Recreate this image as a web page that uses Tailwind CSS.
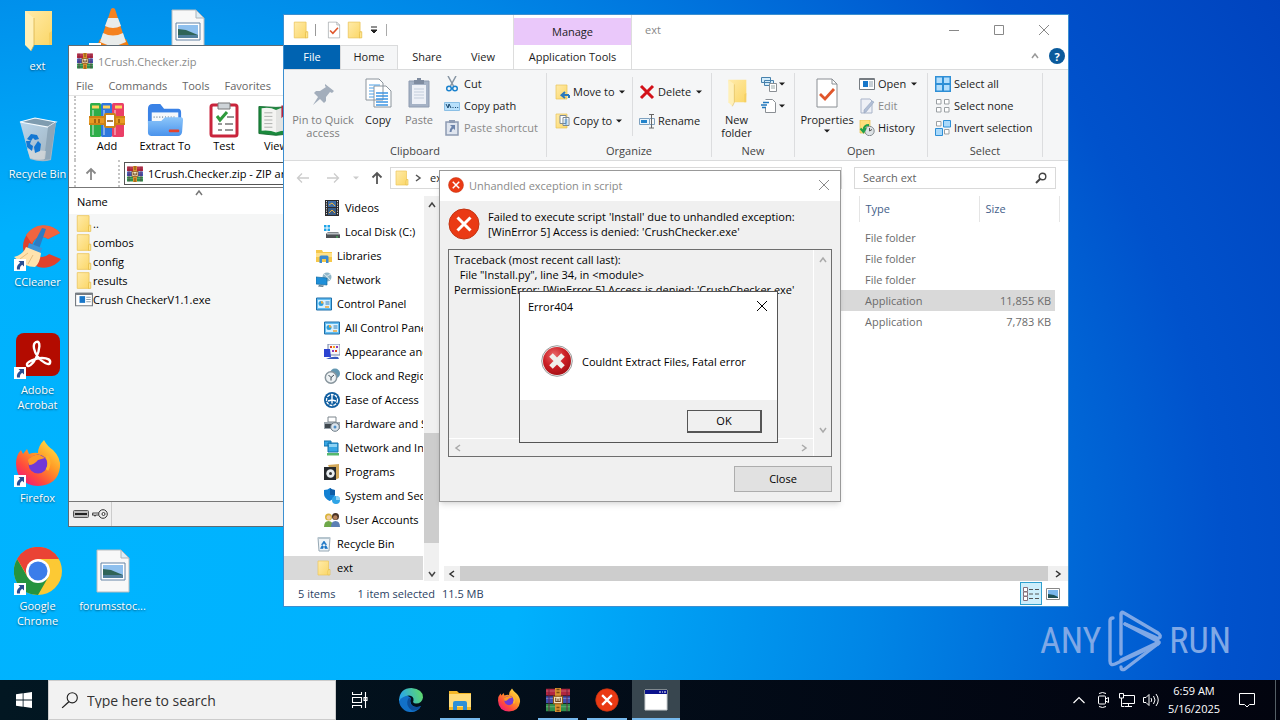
<!DOCTYPE html>
<html lang="en">
<head>
<meta charset="utf-8">
<meta name="viewport" content="width=device-width, initial-scale=1">
<title>Desktop</title>
<script src="https://cdn.jsdelivr.net/npm/@tailwindcss/browser@4"></script>
</head>
<body class="h-screen overflow-hidden font-['Open_Sans','Noto_Sans',sans-serif] text-[11px] leading-[15px] text-black">

<svg class="absolute size-0" aria-hidden="true">
  <defs>
    <linearGradient id="gFolder" x1="0" y1="0" x2="1" y2="1"><stop offset="0" stop-color="#ffebaa"/><stop offset="1" stop-color="#fbd768"/></linearGradient>
    <linearGradient id="gBlue" x1="0" y1="0" x2="0" y2="1"><stop offset="0" stop-color="#8cc6fa"/><stop offset="1" stop-color="#4a93ec"/></linearGradient>
    <linearGradient id="gFox" x1="1" y1="0" x2="0.2" y2="1"><stop offset="0" stop-color="#fff44f"/><stop offset="0.45" stop-color="#ff9a26"/><stop offset="0.75" stop-color="#ff4a3d"/><stop offset="1" stop-color="#f0177e"/></linearGradient>
    <linearGradient id="gEdge" x1="0" y1="0.2" x2="1" y2="0"><stop offset="0" stop-color="#2aa8e8"/><stop offset="1" stop-color="#63dd62"/></linearGradient>
    <radialGradient id="gErr" cx="0.4" cy="0.3" r="0.8"><stop offset="0" stop-color="#e96a6a"/><stop offset="0.5" stop-color="#cc1f25"/><stop offset="1" stop-color="#9c0d12"/></radialGradient>
    <linearGradient id="gBin" x1="0" y1="0" x2="1" y2="1"><stop offset="0" stop-color="#b9d7ee"/><stop offset="1" stop-color="#9fb0bc"/></linearGradient>
  </defs>
  <symbol id="folder" viewBox="0 0 16 16"><path d="M2 1h10.500v14H2z" fill="url(#gFolder)" stroke="#ecc65b" stroke-width=".7"/><path d="M12.500 9.500H14V15h-2v-4z" fill="#ffe58f" stroke="#e3b93f" stroke-width=".6"/></symbol>
  <symbol id="openfolder" viewBox="0 0 48 48"><path d="M11 4h27v20l-1 14H16z" fill="url(#gFolder)"/><path d="M35 26l3 -2 0 14h-3z" fill="#f5cf62"/><path d="M11 4l9 7v27l-3 6-6-6z" fill="#fff0b8"/><path d="M20 11v27l-3 6" fill="none" stroke="#d9b24a" stroke-width=".8"/></symbol>
  <symbol id="shortcut" viewBox="0 0 12 12"><path d="M0 0h12v12H0z" fill="#fff"/><path d="M4.500 2h5.500v5.500L8.200 5.800Q5.500 7.500 6 10.500H3Q2.200 6.500 6.200 3.800z" fill="#2b4f92"/></symbol>
  <symbol id="bin" viewBox="0 0 48 48"><path d="M6 7l15-4 21 4-5 38q-9 3-21-1z" fill="url(#gBin)"/><path d="M6 7l15-4 21 4-8 5z" fill="#7f9cb0" stroke="#f5fbff" stroke-width="1.200"/><path d="M34 12l-4 33 6-1 6-37z" fill="#8ea6b8"/><path d="M13 34l3 9q7 3 15 1l1-8z" fill="#e6e3df" opacity=".6"/><path d="M17 19l6 1 2 4-4 1-2-2-2 3-4-2zM12 26l5 0-1 3 3 2-1 5-5-4zM20 32l4-6 3 3-1 7-5 2z" fill="#1277d3"/></symbol>
  <symbol id="vlc" viewBox="0 0 48 48"><path d="M7 41l4-9h26l4 9v5H7z" fill="#f07d0e"/><path d="M22 2q2-2 4 0l11 34q-12 7-26 0z" fill="#f5821f"/><path d="M19 11h10l3 8q-8 4-16 0zM14 26q10 5 20 0l3 9q-13 7-26 0z" fill="#e9eceb"/></symbol>
  <symbol id="picfile" viewBox="0 0 48 48"><path d="M8 3h24l8 8v34H8z" fill="#f8f8f8" stroke="#b9bcbe"/><path d="M32 3v8h8z" fill="#dcecf5" stroke="#a9b4bb"/><path d="M12 16h24v17H12z" fill="#fff" stroke="#6583a5"/><path d="M14 18h20v13H14z" fill="#8fc0ee"/><path d="M14 22l8 1 12 5v3H14z" fill="#2f6457"/><path d="M14 28h20v3H14z" fill="#52809d"/></symbol>
  <symbol id="ccleaner" viewBox="0 0 48 48"><path d="M46 10A21 21 0 1 0 47 36L35 31A10 10 0 1 1 34 16z" fill="#e0412c"/><path d="M46 10A21 21 0 0 0 12 12l6 9a10 10 0 0 1 16-5z" fill="#f0643f"/><path d="M28 5l4 1-7 20-7-2z" fill="#2c7cc4"/><path d="M15 20l13 5-2 6-13-4z" fill="#3c94d8"/><path d="M12 24l15 6q-1 10-6 14-10 0-21-10 9-2 12-10z" fill="#ffe3ae"/><path d="M6 36l8-6M14 41l5-9" stroke="#e6bd7e"/></symbol>
  <symbol id="acrobat" viewBox="0 0 48 48"><rect x="2" y="2" width="44" height="43" rx="8" fill="#b30b00"/><path d="M22 11c5-2 4 8 0 16-3 6-8 10-9 7s9-7 15-7 9 2 8 5-8-1-12-6-6-13-2-15z" fill="none" stroke="#fff" stroke-width="2.400"/></symbol>
  <symbol id="firefox" viewBox="0 0 48 48"><path d="M30 1q3 6 9 10 8 8 7 17-2 18-22 19Q3 46 2 25q0-9 5-14l2 4 4-5 2 5q5-2 9-1 0-7 6-13z" fill="url(#gFox)"/><circle cx="24" cy="25" r="9.500" fill="#7139d6"/><path d="M14 21q5-6 12-5l5 3-7 2q-4 5-9 5z" fill="#ff9a26"/><path d="M33 17q4 7 0 14" fill="none" stroke="#ffb52e" stroke-width="3"/></symbol>
  <symbol id="chrome" viewBox="0 0 48 48"><circle cx="24" cy="24" r="24" fill="#fcc934"/><path d="M24 24L3.200 12A24 24 0 0 1 44.800 12z" fill="#ea4335"/><path d="M3.200 12A24 24 0 0 0 24 48l10.400-18H13.600z" fill="#25933f"/><path d="M24 12h20.800L34 24z" fill="#fcc934"/><path d="M3.200 12A24 24 0 0 1 44.800 12H24l-10 18z" fill="#ea4335"/><circle cx="24" cy="24" r="12" fill="#fff"/><circle cx="24" cy="24" r="9.500" fill="#3b7dea"/></symbol>
  <symbol id="rar" viewBox="0 0 32 32"><path d="M0 1h32v9H0z" fill="#b3263f"/><path d="M0 11h32v9H0z" fill="#3e4fae"/><path d="M0 21h32v10H0z" fill="#2f8f4b"/><path d="M0 4h32M0 14h32M0 25h32" stroke="#fff" stroke-opacity=".35"/><path d="M4 1v30M28 1v30" stroke="#6d2040" stroke-width="2" opacity=".6"/><path d="M12 0h8v32h-8z" fill="#d9912f"/><path d="M14 2h4M14 6h4M14 26h4M14 30h4" stroke="#7a4a11" stroke-width="2"/><rect x="10" y="11" width="12" height="10" fill="#f4e6c6" stroke="#8c5514" stroke-width="1.500"/><path d="M13 13v5h6v-5M16 14v4" stroke="#70451a" stroke-width="1.500" fill="none"/></symbol>
  <symbol id="add" viewBox="0 0 36 36"><rect x="1" y="1" width="11" height="34" rx="1.500" fill="#2fae4a"/><rect x="12" y="1" width="11" height="34" rx="1.500" fill="#2d77dd"/><rect x="23" y="1" width="12" height="34" rx="1.500" fill="#ea3f67"/><path d="M3 5h7M14 5h7M26 5h7" stroke="#ffd45c" stroke-width="3"/><path d="M4 8v25M15 8v25M26 8v25" stroke="#fff" stroke-opacity=".4" stroke-width="2"/><path d="M0 14h36v9H0z" fill="#e79a23"/><path d="M0 15h36M0 22h36" stroke="#b96c0b"/><rect x="16" y="12" width="10" height="13" rx="1" fill="#fff" stroke="#c98218" stroke-width="2"/><path d="M18 19h6M10 17v4M6 17v4M30 17v4" stroke="#93540c" stroke-width="1.500"/></symbol>
  <symbol id="extract" viewBox="0 0 38 36"><path d="M1 6q0-5 5-5h8l4 5h15q3 0 3 4v12H1z" fill="#3a82e6"/><path d="M5 10h28v12H5z" fill="#f5f8fb"/><path d="M7 15h24" stroke="#8998a8" stroke-width="2" stroke-dasharray="1 2"/><path d="M1 19h14l4-4h17q2 0 2 3l-1 13q-1 4-4 4H5q-4 0-4-4z" fill="url(#gBlue)"/><rect x="23" y="28" width="11" height="3" rx="1" fill="#e4422d"/></symbol>
  <symbol id="test" viewBox="0 0 32 36"><rect x="3" y="3" width="26" height="31" rx="2" fill="#fff" stroke="#c9253c" stroke-width="3"/><path d="M10 1h12v6H10z" fill="#ced4d8" stroke="#777"/><path d="M9 14l3 4 7-8" stroke="#2f9a3d" stroke-width="3" fill="none"/><path d="M19 15h7M10 22h4M17 22h8M10 28h4M17 28h8" stroke="#777" stroke-width="1.500"/></symbol>
  <symbol id="book" viewBox="0 0 40 36"><path d="M1 3l19 1 19-1v30l-19 2-19-2z" fill="#1b8a3d" stroke="#146b30"/><path d="M4 5q9-2 16 2v25q-7-3-16-2z" fill="#f4f4f2"/><path d="M36 5q-9-2-16 2v25q7-3 16-2z" fill="#e3e4e2"/><path d="M7 10h9M7 14h9M7 18h9M7 22h9M7 26h9" stroke="#a7aaa7"/><path d="M26 2h7v14l-4-3-3 3z" fill="#b3263f"/></symbol>
  <symbol id="exe" viewBox="0 0 16 16"><path d="M.5 2.500h15v11H.5z" fill="#fff" stroke="#767c82"/><path d="M1 2h14v2H1z" fill="#767c82"/><path d="M4 5h5v6H4z" fill="#1877c9"/><path d="M10 6h4M10 8h4M10 10h4" stroke="#8fa0ad"/></symbol>
  <symbol id="err" viewBox="0 0 32 32"><circle cx="16" cy="16" r="15" fill="#ea3a14" stroke="#c33412" stroke-width="1"/><path d="M9.500 9.500l13 13M22.500 9.500l-13 13" stroke="#fff" stroke-width="3"/></symbol>
  <symbol id="err2" viewBox="0 0 32 32"><circle cx="16" cy="16" r="15.300" fill="#f4f4f4" stroke="#9b9b9b"/><circle cx="16" cy="16" r="14" fill="url(#gErr)"/><path d="M10 10l12 12M22 10L10 22" stroke="#f0f0ec" stroke-width="5"/></symbol>
  <symbol id="propcheck" viewBox="0 0 32 32"><path d="M6 2h15l5 5v23H6z" fill="#fff" stroke="#8a8f94"/><path d="M21 2v5h5" fill="none" stroke="#8a8f94"/><path d="M9 17l5 5 9-10" fill="none" stroke="#e0562b" stroke-width="2.800"/></symbol>
  <symbol id="x" viewBox="0 0 12 12"><path d="M1 1l10 10M11 1L1 11" stroke="currentColor" fill="none"/></symbol>
  <symbol id="up" viewBox="0 0 8 8"><path d="M1 6l3-4 3 4" stroke="currentColor" stroke-width="1.500" fill="none"/></symbol>
  <symbol id="down" viewBox="0 0 8 8"><path d="M1 2l3 4 3-4" stroke="currentColor" stroke-width="1.500" fill="none"/></symbol>
  <symbol id="left" viewBox="0 0 8 8"><path d="M6 1L2 4l4 3" stroke="currentColor" stroke-width="1.500" fill="none"/></symbol>
  <symbol id="right" viewBox="0 0 8 8"><path d="M2 1l4 3-4 3" stroke="currentColor" stroke-width="1.500" fill="none"/></symbol>
  <symbol id="tri" viewBox="0 0 6 6"><path d="M0 1.500h6l-3 3z" fill="currentColor"/></symbol>
  <symbol id="arrow" viewBox="0 0 14 14"><path d="M13 7H1.500M6 2.500L1.500 7 6 11.500" fill="none" stroke="currentColor" stroke-width="1.300"/></symbol>
  <symbol id="arrowup" viewBox="0 0 14 14"><path d="M7 13V2M2.500 6.500L7 2l4.500 4.500" fill="none" stroke="currentColor" stroke-width="1.800"/></symbol>
  <symbol id="lens" viewBox="0 0 16 16"><circle cx="10" cy="6" r="4.500" fill="none" stroke="currentColor"/><path d="M7 9.500L1 15" stroke="currentColor" stroke-width="1.200"/></symbol>
  <symbol id="pin" viewBox="0 0 24 24"><path d="M14 1l9 7-2 2-2-1-4 5v4l-2 2-4-4-7 6 5-8-4-4 2-2h4l6-4-1-1z" fill="#a3aebc"/></symbol>
  <symbol id="copy" viewBox="0 0 32 32"><path d="M4 2h13l4 4v17H4zM12 9h12l5 5v16H12z" fill="#fff" stroke="#8b949c"/><path d="M7 8h11M7 11h5M7 14h5M7 17h5M7 20h5" stroke="#4da0e6"/><path d="M14 16h12M14 19h12M14 22h12M14 25h12M14 28h12" stroke="#3d95e4" stroke-width="1.300"/></symbol>
  <symbol id="paste" viewBox="0 0 32 32"><path d="M6 4h20v26H6z" fill="#a5b2c5" stroke="#8e9bb0"/><path d="M9 8h14v19H9z" fill="#eef1f7"/><path d="M11 3h10v4H11zM14 1h4v3h-4z" fill="#7f8ca0"/><path d="M11 12h10M11 15h10M11 18h10M11 21h10" stroke="#c3cddb"/></symbol>
  <symbol id="cut" viewBox="0 0 16 16"><path d="M4 0l5.500 10M12 0L6.500 10" stroke="#8795a3" stroke-width="1.500"/><circle cx="5" cy="12.500" r="2.300" fill="none" stroke="#1b82cd" stroke-width="1.500"/><circle cx="11" cy="12.500" r="2.300" fill="none" stroke="#1b82cd" stroke-width="1.500"/></symbol>
  <symbol id="copypath" viewBox="0 0 16 16"><path d="M.5 4.500h15v8H.5z" fill="#b8e0fb" stroke="#8abfe5"/><path d="M2 6l2 4 1-4 2 4M8.500 9.500h1M11 9.500h1M13.200 9.500h1" stroke="#15456c" fill="none"/></symbol>
  <symbol id="pastesc" viewBox="0 0 16 16"><path d="M2 2h12v13H2z" fill="#dfe5ef" stroke="#8d9bb3" stroke-width="1.500"/><path d="M5 0h6v3H5z" fill="#8d9bb3"/><path d="M6 5h5v5l-1.700-1.500Q7.500 9.500 7.500 12H5.500Q5.300 9 7.800 6.700z" fill="#6d84ab"/></symbol>
  <symbol id="moveto" viewBox="0 0 16 16"><path d="M1 1h11v14H1z" fill="url(#gFolder)" stroke="#e8c358" stroke-width=".7"/><path d="M14 11v3M14 11H6.500M10 8l-3.500 3.200L10 14" fill="none" stroke="#2b79bd" stroke-width="2"/></symbol>
  <symbol id="copyto" viewBox="0 0 16 16"><path d="M1 1h11v14H1z" fill="url(#gFolder)" stroke="#e8c358" stroke-width=".7"/><path d="M5 2.500h6v8H5zM8 4.500h6v8H8z" fill="#fff" stroke="#7c8995"/><path d="M9.500 7h3M9.500 9h3M9.500 11h3" stroke="#3c8ed5"/></symbol>
  <symbol id="delete" viewBox="0 0 16 16"><path d="M2 2l12 12M14 2L2 14" stroke="#d31119" stroke-width="3"/></symbol>
  <symbol id="rename" viewBox="0 0 16 16"><path d="M.5 5.500h10v6H.5z" fill="#eaf5fd" stroke="#7ea1bf"/><path d="M2 7h6v3H2z" fill="#2383cb"/><path d="M11 5.500h4.500v6H11" fill="none" stroke="#7ea1bf"/><path d="M10 1.500h5M10 15h5M12.500 1.500v13.500" stroke="#666" fill="none"/></symbol>
  <symbol id="newitem" viewBox="0 0 16 16"><path d="M.5 1.500h9v5h-9zM3.500 4.500h9v5h-9z" fill="#d3ecfb" stroke="#4781ac"/><path d="M8.500 7.500h7v8h-7z" fill="#fff" stroke="#8a8f94"/><path d="M10 10h4M10 12h4" stroke="#9aa"/></symbol>
  <symbol id="easy" viewBox="0 0 16 16"><path d="M4.500 1.500h7l3 3v10h-10V10" fill="#fff" stroke="#8a8f94"/><path d="M2 4.500h6M0 7h6M1 9.500h4" stroke="#2278bd" stroke-width="1.300"/></symbol>
  <symbol id="edit" viewBox="0 0 16 16"><path d="M2 1h9l2 2v12H2z" fill="#eef0f6" stroke="#a9b4c9"/><path d="M15 4L7 14l-2 1 0-3 8-9z" fill="#b2bfd6" stroke="#93a2be" stroke-width=".6"/></symbol>
  <symbol id="history" viewBox="0 0 16 16"><path d="M1 0h10v13H1z" fill="#ffdf7c" stroke="#e5bd4b" stroke-width=".7"/><circle cx="10.500" cy="11" r="4.700" fill="#dde2e5" stroke="#858c91"/><path d="M10.500 8v3l2.500-1.500" stroke="#555" fill="none"/><path d="M10 5Q5 5 4.500 10M1.500 8.500l3 3.500 2.500-4" fill="none" stroke="#21a04b" stroke-width="2"/></symbol>
  <symbol id="selall" viewBox="0 0 16 16"><path d="M0 0h16v16H0z" fill="#2e8fd6"/><path d="M1.500 1.500h5.500v5.500H1.500zM9 1.500h5.500v5.500H9zM1.500 9h5.500v5.500H1.500zM9 9h5.500v5.500H9z" fill="#b3defc"/></symbol>
  <symbol id="selnone" viewBox="0 0 16 16"><path d="M1.500 1.500h4.500v4.500H1.500zM9.500 1.500h4.500v4.500H9.500zM1.500 9.500h4.500v4.500H1.500zM9.500 9.500h4.500v4.500H9.500z" fill="#fff" stroke="#9a9fa3"/></symbol>
  <symbol id="selinv" viewBox="0 0 16 16"><path d="M1.500 1.500h4.500v4.500H1.500zM9.500 9.500h4.500v4.500H9.500z" fill="#fff" stroke="#9a9fa3"/><path d="M8.500.5h7v6.500h-7zM.5 8.500h7v7h-7z" fill="#a9d9fb" stroke="#2e8fd6"/></symbol>
  <symbol id="video" viewBox="0 0 16 16"><path d="M1 0h14v16H1z" fill="#2a2b2e"/><path d="M2.500 1v14M13.500 1v14" stroke="#ddd" stroke-dasharray="1.200 1.200"/><path d="M4 1h8v6H4z" fill="#406fa8"/><path d="M4 8h8v7H4z" fill="#3b5d87"/><path d="M5 5l3-2 3 3M5 13l3-3 3 3" stroke="#f0b43b" fill="none"/></symbol>
  <symbol id="disk" viewBox="0 0 16 16"><path d="M0 1h2.500v2.500H0zM3.500 1H6v2.500H3.500zM0 4.500h2.500V7H0zM3.500 4.500H6V7H3.500z" fill="#1ea4e8"/><path d="M2 10l2-2h10l2 3v3H2z" fill="#4d5155"/><path d="M3 9.500h12" stroke="#b9bec2" stroke-width="2"/><path d="M12 13h2" stroke="#45d05c"/></symbol>
  <symbol id="library" viewBox="0 0 16 16"><path d="M0 2h6l1 2h9v10H0z" fill="#f6c84a"/><path d="M0 5h16v4H0z" fill="#ffe18a"/><path d="M3.500 15V9q0-1.500 1.500-1.500h6q1.500 0 1.500 1.500v6h-2.500v-4H6v4z" fill="#3b8ad0"/></symbol>
  <symbol id="network" viewBox="0 0 16 16"><circle cx="11" cy="5" r="4.500" fill="#8fb6c8"/><path d="M8 2q3 2 6 6M15 2q-4 1-6 5" stroke="#dcebf1" fill="none"/><path d="M0 5l11 1v7L0 12z" fill="#1e8fd9" stroke="#156a9f" stroke-width=".7"/><path d="M3 13l5 .5-1 1.500-5-.5z" fill="#5c7e92"/></symbol>
  <symbol id="cpl" viewBox="0 0 16 16"><path d="M.5 2h15v12H.5z" fill="#62bdf2" stroke="#1e6fa9"/><path d="M2 4h12v8H2z" fill="#d9f1ff"/><circle cx="5" cy="7.500" r="2.500" fill="#2f9fdb"/><path d="M5 7.500V5a2.500 2.500 0 0 1 2.500 2.500z" fill="#f2a93b"/><path d="M9.500 6h4M9.500 8h4" stroke="#2d7db8"/><path d="M9 11h4" stroke="#eca53a" stroke-width="1.500"/></symbol>
  <symbol id="appear" viewBox="0 0 16 16"><path d="M4 0h12v11H4z" fill="#f5f5f8" stroke="#7180a5"/><path d="M6 2h2v2H6zM11 6h2v2h-2z" fill="#e0431f"/><path d="M9 2h2v2H9z" fill="#f6a51f"/><path d="M12 2h2v2h-2zM8 6h2v2H8z" fill="#8d3ab9"/><path d="M0 5h6l1 8H0z" fill="#2c43d1"/><path d="M2 15q6-3 12-2l1 2z" fill="#3958be"/></symbol>
  <symbol id="clock" viewBox="0 0 16 16"><circle cx="11" cy="5.500" r="5" fill="#6497b1"/><circle cx="7" cy="9.500" r="5.700" fill="#eef2f4" stroke="#88959d" stroke-width="1.500"/><path d="M4.500 7L7 9.500l3-2.500M7 9.500v3" stroke="#3b4a55" fill="none"/></symbol>
  <symbol id="ease" viewBox="0 0 16 16"><circle cx="8" cy="8" r="8" fill="#0f5d9f"/><circle cx="8" cy="8" r="5.500" fill="none" stroke="#fff" stroke-width="1.300" stroke-dasharray="3 1"/><path d="M8 2v6l4 1M8 8l-4 1M8 11.500V8" stroke="#fff" stroke-width="1.400" fill="none"/></symbol>
  <symbol id="hardware" viewBox="0 0 16 16"><path d="M4 1h8v5H4z" fill="#fff" stroke="#7d868d"/><path d="M0 6h16v7H0z" fill="#9ba5ad"/><path d="M1 8h8v4H1z" fill="#3f474e"/><circle cx="11" cy="11" r="4.300" fill="#dbe4ec" stroke="#6e7b86"/><circle cx="11" cy="11" r="1.500" fill="#4e8fc8"/></symbol>
  <symbol id="netint" viewBox="0 0 16 16"><path d="M0 1h7v5H0zM4 3h10v9H4z" fill="#36a6e4" stroke="#1270a9"/><path d="M5 4h8v3H5z" fill="#8cd2f5"/><path d="M3 13h12v2.500H3z" fill="#55b86d"/></symbol>
  <symbol id="programs" viewBox="0 0 16 16"><path d="M4 1l11-1v14l-4 2z" fill="#d2a85a"/><path d="M0 3h12v13H0z" fill="#25292d"/><circle cx="6.500" cy="9.500" r="4.200" fill="#e8edf0"/><circle cx="6.500" cy="9.500" r="1.500" fill="#333"/></symbol>
  <symbol id="security" viewBox="0 0 16 16"><path d="M0 2q4 0 6-2 2 2 5 2v5q-1 4-5.500 6Q0 10 0 6z" fill="#1381d3"/><path d="M6 0q2 2 5 2v5l-5 0z" fill="#0d5ca6"/><circle cx="12" cy="12" r="4" fill="#2fa4e6"/><path d="M12 12V8a4 4 0 0 1 4 4z" fill="#8bd2f7"/></symbol>
  <symbol id="users" viewBox="0 0 16 16"><circle cx="4.500" cy="5" r="3.500" fill="#d9b43d"/><circle cx="4.800" cy="5.500" r="2.200" fill="#f2cda6"/><path d="M0 15q0-6 4.500-6T9 15z" fill="#6fa849"/><circle cx="11.500" cy="4.500" r="3.500" fill="#4a3426"/><circle cx="11.300" cy="5.500" r="2.200" fill="#b3805b"/><path d="M7 15q0-6 4.500-6T16 15z" fill="#5b7fb4"/></symbol>
  <symbol id="binsm" viewBox="0 0 16 16"><path d="M2 1.500h12l-1 13.500H3z" fill="#eef4f8" stroke="#97a8b4"/><path d="M2 2h12" stroke="#b6c5ce" stroke-width="2"/><path d="M8 5l2.500 3.500H9L8 7 7 8.500H5.500zM4.500 12.500l1.500-3 1.500 1-.5 2zM11.500 12.500l-1.500-3-1.500 1 .5 2z" fill="#1873c4" stroke="#1873c4" stroke-width=".6"/></symbol>
  <symbol id="edge" viewBox="0 0 24 24"><path d="M0 12a12 12 0 0 0 17 11q4-2 5-5-4 2-8 0-4-3-2-8L6 6z" fill="#1271c8"/><path d="M0 12Q1 0 12.500 0 24 1 24 9.500q-1 6-7 6-4-.5-2.500-3Q15 8 10 7.500 3 8 0 13z" fill="url(#gEdge)"/><path d="M9 11q-3 7 4 11.500 6 .5 9-4.500-5 2-8.500 0-4-3-1.500-7.500-2-1-3 .5z" fill="#0c4f9b"/></symbol>
  <symbol id="explorer" viewBox="0 0 24 24"><path d="M1 3h8l2 2h12v17H1z" fill="#f4b728"/><path d="M1 6h22v13H1z" fill="#ffdc7b"/><path d="M5 22v-7q0-2 2-2h10q2 0 2 2v7h-4v-4H9v4z" fill="#2d8fd8"/></symbol>
  <symbol id="anylogo" viewBox="0 0 56 62"><g fill="none" stroke="currentColor" stroke-width="3.400" stroke-linejoin="round" stroke-linecap="round"><path d="M6 8Q3 8 3 11v40q0 5 5 3l43-20"/><path d="M14 44V4q0-3 3-1l34 20q4 3 1 5-2 1-4-1L18 14"/><path d="M18 14l34 18L14 50"/><path d="M52 33L18 59q-4 2-4-2"/></g></symbol>
</svg>

<div class="flex h-full flex-col">
<main class="relative min-h-0 flex-1 overflow-hidden bg-[radial-gradient(ellipse_125%_200%_at_8%_85%,#00b4ff_0%,#00b1fd_26%,#0086e6_48%,#0052cc_70%,#0034b0_100%)]">

  <!-- Desktop shortcuts -->
  <nav aria-label="Desktop" class="grid grid-cols-[repeat(3,75px)] grid-rows-[repeat(6,108px)] grid-flow-col text-center text-white [text-shadow:0_1px_2px_#0008]">
    <a href="#" class="flex flex-col items-center gap-[3px] pt-[7px]"><svg class="size-12"><use href="#openfolder"/></svg>ext</a>
    <a href="#" class="flex flex-col items-center gap-[3px] pt-[7px]"><svg class="size-12"><use href="#bin"/></svg>Recycle Bin</a>
    <a href="#" class="flex flex-col items-center gap-[3px] pt-[7px]"><span class="relative"><svg class="size-12"><use href="#ccleaner"/></svg><svg class="absolute bottom-0 left-0 size-3"><use href="#shortcut"/></svg></span>CCleaner</a>
    <a href="#" class="flex flex-col items-center gap-[3px] pt-[7px]"><span class="relative"><svg class="size-12"><use href="#acrobat"/></svg><svg class="absolute bottom-0 left-0 size-3"><use href="#shortcut"/></svg></span><span>Adobe<br>Acrobat</span></a>
    <a href="#" class="flex flex-col items-center gap-[3px] pt-[7px]"><span class="relative"><svg class="size-12"><use href="#firefox"/></svg><svg class="absolute bottom-0 left-0 size-3"><use href="#shortcut"/></svg></span>Firefox</a>
    <a href="#" class="flex flex-col items-center gap-[3px] pt-[7px]"><span class="relative"><svg class="size-12"><use href="#chrome"/></svg><svg class="absolute bottom-0 left-0 size-3"><use href="#shortcut"/></svg></span><span>Google<br>Chrome</span></a>
    <a href="#" aria-label="Media player" class="col-start-2 row-start-1 flex flex-col items-center pt-[7px]"><span class="relative"><svg class="size-12"><use href="#vlc"/></svg><svg class="absolute bottom-0 left-0 size-3"><use href="#shortcut"/></svg></span></a>
    <a href="#" class="col-start-2 row-start-6 flex flex-col items-center gap-[3px] pt-[7px]"><svg class="size-12"><use href="#picfile"/></svg>forumsstoc...</a>
    <a href="#" aria-label="Picture" class="col-start-3 row-start-1 flex flex-col items-center pt-[7px]"><svg class="size-12"><use href="#picfile"/></svg></a>
  </nav>

  <!-- Watermark -->
  <div class="absolute right-[49px] bottom-2 flex items-center gap-[6px] font-['Liberation_Sans_Narrow','Roboto_Condensed','Roboto',sans-serif] text-[36px] leading-[62px] text-[#7fa8e6]">
    <span>ANY</span><svg class="h-[62px] w-14"><use href="#anylogo"/></svg><span>RUN</span>
  </div>

  <!-- Archive window -->
  <section aria-label="1Crush.Checker.zip" class="absolute top-[45px] left-[68px] flex h-[482px] w-[480px] flex-col border border-[#5d6b75] bg-white">
    <header class="flex h-[30px] shrink-0 items-center gap-[5px] pl-2 text-[#8a8a8a]"><svg class="size-4"><use href="#rar"/></svg><h2>1Crush.Checker.zip</h2></header>
    <div class="flex h-5 shrink-0 items-center gap-[15px] border-b border-[#e5e5e5] pl-[7px] text-[#666]"><button>File</button><button>Commands</button><button>Tools</button><button>Favorites</button></div>
    <div class="ml-[5px] flex h-16 shrink-0 border-l-2 border-dotted border-[#c5c5c5]">
      <button class="flex w-[62px] flex-col items-center pt-[6px]"><svg class="h-9 w-9"><use href="#add"/></svg>Add</button>
      <button class="flex w-[54px] flex-col items-center pt-[6px] whitespace-nowrap"><svg class="h-9 w-9"><use href="#extract"/></svg>Extract To</button>
      <button class="flex w-16 flex-col items-center pt-[6px]"><svg class="h-9 w-9"><use href="#test"/></svg>Test</button>
      <button class="flex w-10 flex-col items-center pt-[6px]"><svg class="h-9 w-9"><use href="#book"/></svg>View</button>
    </div>
    <div class="ml-[5px] flex h-[27px] shrink-0 items-center border-l-2 border-dotted border-[#c5c5c5]">
      <button aria-label="Up one level" class="mr-1 flex h-full w-11 items-center border-r-2 border-dotted border-[#c5c5c5] pl-2 text-[#888]"><svg class="size-3.5"><use href="#arrowup"/></svg></button>
      <div class="flex h-[23px] flex-1 items-center gap-[5px] border border-[#555] pl-0.5"><svg class="size-4"><use href="#rar"/></svg>1Crush.Checker.zip - ZIP archive</div>
    </div>
    <div class="flex min-h-0 flex-1 flex-col border-t border-[#777]">
      <div class="flex h-[26px] shrink-0 items-center pl-2">Name<svg class="mb-4 ml-[87px] size-2 text-[#777]"><use href="#up"/></svg></div>
      <ul class="flex-1 bg-[#f5f6f6] pl-[6px] leading-[19px]">
        <li class="flex items-center"><svg class="h-[19px] w-[18px]"><use href="#folder"/></svg>..</li>
        <li class="flex items-center"><svg class="h-[19px] w-[18px]"><use href="#folder"/></svg>combos</li>
        <li class="flex items-center"><svg class="h-[19px] w-[18px]"><use href="#folder"/></svg>config</li>
        <li class="flex items-center"><svg class="h-[19px] w-[18px]"><use href="#folder"/></svg>results</li>
        <li class="flex items-center"><svg class="h-[19px] w-[18px]"><use href="#exe"/></svg>Crush CheckerV1.1.exe</li>
      </ul>
    </div>
    <footer class="flex h-[25px] shrink-0 items-center gap-[3px] border-t border-[#777] bg-[#f0f0f0] pl-1">
      <svg class="h-2 w-4" viewBox="0 0 16 8"><rect x=".5" y=".5" width="15" height="7" rx="1" fill="#bbb" stroke="#555"/><path d="M2 3h12v2H2z" fill="#222"/></svg>
      <svg class="h-3 w-4" viewBox="0 0 16 12"><path d="M7 5H1l-1 2h2l1 1 1-1h3" fill="none" stroke="#444" stroke-width="1.200"/><circle cx="11" cy="6" r="4.300" fill="#eee" stroke="#333"/><circle cx="11.500" cy="6" r="1.500" fill="#fff" stroke="#333"/></svg>
      <span class="h-full border-l border-[#ccc]"></span>
    </footer>
  </section>

  <!-- File manager window -->
  <section aria-label="ext" class="absolute top-[14px] left-[283px] flex h-[593px] w-[786px] flex-col border border-[#3c8fd0] bg-white text-[#1c1c1c]">
    <header class="flex h-[54px] shrink-0">
      <div class="flex w-[229px] shrink-0 flex-col">
        <div class="flex h-[30px] items-center pl-2">
          <svg class="size-[18px]"><use href="#folder"/></svg><span class="mx-[5px] h-3 border-l border-[#999]"></span>
          <button aria-label="Properties" class="ml-1"><svg class="size-[18px]"><use href="#propcheck"/></svg></button>
          <button aria-label="New folder" class="ml-[3px]"><svg class="size-[18px]"><use href="#folder"/></svg></button>
          <button aria-label="Customize toolbar" class="ml-[6px]"><svg class="h-2 w-2" viewBox="0 0 8 8"><path d="M1 1h6M1 4h6L4 7z" stroke="#222" fill="#222"/></svg></button>
          <span class="ml-2 h-3 border-l border-[#aaa]"></span>
        </div>
        <div role="tablist" class="flex h-6">
          <button role="tab" class="w-14 bg-[#0063b1] pb-px text-white">File</button>
          <button role="tab" aria-selected="true" class="w-[58px] border-x border-t border-[#dadbdc] bg-[#f5f6f7] pb-0.5">Home</button>
          <button role="tab" class="w-[58px] pb-px">Share</button>
          <button role="tab" class="w-[54px] pb-px">View</button>
        </div>
      </div>
      <div class="w-[119px] shrink-0 border-x border-[#ddd] text-center">
        <div class="mt-[3px] flex h-[27px] items-center justify-center bg-[#eac8fa]">Manage</div>
        <button role="tab" class="h-6 pb-px whitespace-nowrap">Application Tools</button>
      </div>
      <h2 class="pt-[7px] pl-[13px] text-[#888]">ext</h2>
      <div class="ml-auto flex flex-col">
        <div class="flex h-[29px] items-center pr-px text-[#888]">
          <button aria-label="Minimize" class="flex w-[45px] justify-center"><svg class="size-3" viewBox="0 0 12 12"><path d="M1 6.500h10" stroke="currentColor"/></svg></button>
          <button aria-label="Maximize" class="flex w-[45px] justify-center"><svg class="size-3" viewBox="0 0 12 12"><path d="M1.500 1.500h9v9h-9z" fill="none" stroke="currentColor"/></svg></button>
          <button aria-label="Close" class="flex w-[46px] justify-center"><svg class="size-3"><use href="#x"/></svg></button>
        </div>
        <div class="flex h-6 items-center justify-end gap-[10px] pr-[3px]">
          <button aria-label="Collapse ribbon" class="text-[#999]"><svg class="size-2"><use href="#up"/></svg></button>
          <button aria-label="Help" class="flex size-4 items-center justify-center rounded-full bg-[#0a5a9c] font-bold text-white">?</button>
        </div>
      </div>
    </header>

    <!-- Ribbon -->
    <div class="flex h-[92px] shrink-0 border-y border-[#dadbdc] bg-[#f5f6f7] py-[3px] leading-[13px]">
      <div class="flex w-[263px] shrink-0 flex-col border-r border-[#dcdddf]">
        <div class="flex h-[71px]">
          <button class="flex w-[78px] flex-col items-center text-[#7d7d7d]"><svg class="mt-2 mb-1 h-7 w-6"><use href="#pin"/></svg>Pin to Quick<br>access</button>
          <button class="flex w-8 flex-col items-center"><svg class="mt-1 mb-1 size-8"><use href="#copy"/></svg>Copy</button>
          <button class="flex w-[50px] flex-col items-center text-[#7d7d7d]"><svg class="mt-1 mb-1 size-8"><use href="#paste"/></svg>Paste</button>
          <div class="flex flex-col leading-[22px]">
            <button class="flex items-center gap-1"><svg class="size-4"><use href="#cut"/></svg>Cut</button>
            <button class="flex items-center gap-1"><svg class="size-4"><use href="#copypath"/></svg>Copy path</button>
            <button class="flex items-center gap-1 text-[#8a8a8a]"><svg class="size-4"><use href="#pastesc"/></svg>Paste shortcut</button>
          </div>
        </div>
        <div class="text-center text-[#444]">Clipboard</div>
      </div>
      <div class="flex w-[165px] shrink-0 flex-col border-r border-[#dcdddf]">
        <div class="flex h-[71px] leading-[29px]">
          <div class="mt-1 mb-2 flex w-[86px] flex-col border-r border-[#dcdddf] pl-2">
            <button class="flex items-center gap-[2px]"><svg class="size-4"><use href="#moveto"/></svg>Move to<svg class="ml-[2px] size-1.5"><use href="#tri"/></svg></button>
            <button class="flex items-center gap-[2px]"><svg class="size-4"><use href="#copyto"/></svg>Copy to<svg class="ml-[2px] size-1.5"><use href="#tri"/></svg></button>
          </div>
          <div class="mt-1 flex flex-col pl-[6px]">
            <button class="flex items-center gap-[3px]"><svg class="size-4"><use href="#delete"/></svg>Delete<svg class="ml-[2px] size-1.5"><use href="#tri"/></svg></button>
            <button class="flex items-center gap-[3px]"><svg class="size-4"><use href="#rename"/></svg>Rename</button>
          </div>
        </div>
        <div class="text-center text-[#444]">Organize</div>
      </div>
      <div class="flex w-[83px] shrink-0 flex-col border-r border-[#dcdddf]">
        <div class="flex h-[71px]">
          <button class="flex w-[49px] flex-col items-center"><svg class="mt-1 mb-1 size-8"><use href="#openfolder"/></svg>New<br>folder</button>
          <div class="flex flex-col">
            <button aria-label="New item" class="flex h-[22px] items-center gap-[2px]"><svg class="size-4"><use href="#newitem"/></svg><svg class="size-1.5"><use href="#tri"/></svg></button>
            <button aria-label="Easy access" class="flex h-[22px] items-center gap-[2px]"><svg class="size-4"><use href="#easy"/></svg><svg class="size-1.5"><use href="#tri"/></svg></button>
          </div>
        </div>
        <div class="text-center text-[#444]">New</div>
      </div>
      <div class="flex w-[133px] shrink-0 flex-col border-r border-[#dcdddf]">
        <div class="flex h-[71px]">
          <button class="flex w-[64px] flex-col items-center"><svg class="mt-1 mb-1 size-8"><use href="#propcheck"/></svg>Properties<svg class="mt-0.5 size-1.5"><use href="#tri"/></svg></button>
          <div class="flex flex-col leading-[22px]">
            <button class="flex items-center gap-[3px]"><svg class="size-4"><use href="#exe"/></svg>Open<svg class="ml-[2px] size-1.5"><use href="#tri"/></svg></button>
            <button class="flex items-center gap-[3px] text-[#8a8a8a]"><svg class="size-4"><use href="#edit"/></svg>Edit</button>
            <button class="flex items-center gap-[3px]"><svg class="size-4"><use href="#history"/></svg>History</button>
          </div>
        </div>
        <div class="text-center text-[#444]">Open</div>
      </div>
      <div class="flex w-[115px] shrink-0 flex-col border-r border-[#dcdddf]">
        <div class="flex h-[71px] flex-col pl-[7px] leading-[22px] whitespace-nowrap">
          <button class="flex items-center gap-[3px]"><svg class="size-4"><use href="#selall"/></svg>Select all</button>
          <button class="flex items-center gap-[3px]"><svg class="size-4"><use href="#selnone"/></svg>Select none</button>
          <button class="flex items-center gap-[3px]"><svg class="size-4"><use href="#selinv"/></svg>Invert selection</button>
        </div>
        <div class="text-center text-[#444]">Select</div>
      </div>
    </div>

    <!-- Address row -->
    <div class="flex h-[35px] shrink-0 items-center pr-3 pb-0.5">
      <button aria-label="Back" class="ml-3 text-[#ccc]"><svg class="size-3.5"><use href="#arrow"/></svg></button>
      <button aria-label="Forward" class="ml-4 rotate-180 text-[#ccc]"><svg class="size-3.5"><use href="#arrow"/></svg></button>
      <button aria-label="Recent" class="ml-[13px] text-[#ccc]"><svg class="size-1.5"><use href="#tri"/></svg></button>
      <button aria-label="Up" class="ml-[11px] text-[#555]"><svg class="size-3.5"><use href="#arrowup"/></svg></button>
      <div class="ml-[6px] flex h-[22px] flex-1 items-center border border-[#d9d9d9] pl-[3px]"><svg class="size-4"><use href="#folder"/></svg><svg class="mr-2 ml-1 size-2 text-[#555]"><use href="#right"/></svg>ext</div>
      <label class="ml-3 flex h-[22px] w-[202px] items-center border border-[#d9d9d9] px-2"><input type="search" aria-label="Search ext" placeholder="Search ext" class="min-w-0 flex-1 outline-none placeholder:text-[#5f5f5f]"><svg class="size-3 text-[#444]" viewBox="0 0 12 12"><circle cx="7.500" cy="4.500" r="3.300" fill="none" stroke="currentColor" stroke-width="1.400"/><path d="M5 7L1 11" stroke="currentColor" stroke-width="2"/></svg></label>
    </div>

    <div class="flex min-h-0 flex-1 text-black">
      <nav aria-label="Folders" class="flex w-[155px] shrink-0">
        <ul class="flex-1 overflow-hidden leading-6 whitespace-nowrap">
          <li class="flex items-center gap-[5px] pl-10"><svg class="size-4 shrink-0"><use href="#video"/></svg>Videos</li>
          <li class="flex items-center gap-[5px] pl-10"><svg class="size-4 shrink-0"><use href="#disk"/></svg>Local Disk (C:)</li>
          <li class="flex items-center gap-[5px] pl-8"><svg class="size-4 shrink-0"><use href="#library"/></svg>Libraries</li>
          <li class="flex items-center gap-[5px] pl-8"><svg class="size-4 shrink-0"><use href="#network"/></svg>Network</li>
          <li class="flex items-center gap-[5px] pl-8"><svg class="size-4 shrink-0"><use href="#cpl"/></svg>Control Panel</li>
          <li class="flex items-center gap-[5px] pl-10"><svg class="size-4 shrink-0"><use href="#cpl"/></svg>All Control Panel Items</li>
          <li class="flex items-center gap-[5px] pl-10"><svg class="size-4 shrink-0"><use href="#appear"/></svg>Appearance and Personalization</li>
          <li class="flex items-center gap-[5px] pl-10"><svg class="size-4 shrink-0"><use href="#clock"/></svg>Clock and Region</li>
          <li class="flex items-center gap-[5px] pl-10"><svg class="size-4 shrink-0"><use href="#ease"/></svg>Ease of Access</li>
          <li class="flex items-center gap-[5px] pl-10"><svg class="size-4 shrink-0"><use href="#hardware"/></svg>Hardware and Sound</li>
          <li class="flex items-center gap-[5px] pl-10"><svg class="size-4 shrink-0"><use href="#netint"/></svg>Network and Internet</li>
          <li class="flex items-center gap-[5px] pl-10"><svg class="size-4 shrink-0"><use href="#programs"/></svg>Programs</li>
          <li class="flex items-center gap-[5px] pl-10"><svg class="size-4 shrink-0"><use href="#security"/></svg>System and Security</li>
          <li class="flex items-center gap-[5px] pl-10"><svg class="size-4 shrink-0"><use href="#users"/></svg>User Accounts</li>
          <li class="flex items-center gap-[5px] pl-8"><svg class="size-4 shrink-0"><use href="#binsm"/></svg>Recycle Bin</li>
          <li class="flex items-center gap-[5px] bg-[#d9d9d9] pl-8"><svg class="size-4 shrink-0"><use href="#folder"/></svg>ext</li>
        </ul>
        <div class="ml-px flex w-[15px] flex-col items-center bg-[#f0f0f0] pt-[5px] pb-[3px] text-[#444]">
          <svg class="size-2 shrink-0"><use href="#up"/></svg><span class="flex-1"></span><span class="h-[110px] w-full bg-[#cdcdcd]"></span><svg class="mt-[27px] size-2 shrink-0"><use href="#down"/></svg>
        </div>
      </nav>
      <div class="flex min-w-0 flex-1 flex-col pl-[5px]">
        <table class="w-full table-fixed text-left text-[#6b6b6b]">
          <thead class="leading-[26px] text-[#44608a]"><tr><th class="border-r border-[#e5e5e5]"></th><th class="w-[120px] border-r border-[#e5e5e5] pl-[6px] font-normal">Type</th><th class="w-[76px] pl-[6px] font-normal">Size</th><th class="w-1 border-r border-[#e5e5e5]"></th><th class="w-[9px]"></th></tr></thead>
          <tbody class="leading-[21px] before:block before:h-[5px]">
            <tr><td></td><td class="pl-[6px]">File folder</td><td></td><td></td><td></td></tr>
            <tr><td></td><td class="pl-[6px]">File folder</td><td></td><td></td><td></td></tr>
            <tr><td></td><td class="pl-[6px]">File folder</td><td></td><td></td><td></td></tr>
            <tr><td class="bg-[#d9d9d9]"></td><td class="bg-[#d9d9d9] pl-[6px]">Application</td><td class="bg-[#d9d9d9] pr-1 text-right">11,855 KB</td><td></td><td></td></tr>
            <tr><td></td><td class="pl-[6px]">Application</td><td class="pr-1 text-right">7,783 KB</td><td></td><td></td></tr>
          </tbody>
        </table>
        <div class="mt-auto flex h-[15px] shrink-0 items-center bg-[#f0f0f0] text-[#333]"><svg class="mx-1 size-2"><use href="#left"/></svg><span class="h-full flex-1 bg-[#cdcdcd]"></span><svg class="mx-[6px] size-2"><use href="#right"/></svg></div>
      </div>
    </div>
    <footer class="flex h-[25px] shrink-0 items-center pl-[14px] text-[#2b3f63]">
      <span>5 items</span><span class="ml-[22px]">1 item selected</span><span class="ml-[7px]">11.5 MB</span>
      <button aria-label="Details view" class="ml-auto flex h-[23px] w-[22px] items-center justify-center border border-[#2fa0cf] bg-[#cdeefb]"><svg class="h-3.5 w-4" viewBox="0 0 16 14"><path d="M.5.500h4v4h-4zM.5 5h4v4h-4zM.5 9.500h4v4h-4z" fill="#fff" stroke="#86707c"/><path d="M6 2.500h4M6 7h4M6 11.500h4M12 2.500h4M12 7h4M12 11.500h4" stroke="#555"/></svg></button>
      <button aria-label="Thumbnail view" class="mr-2 ml-1"><svg class="h-3 w-3.5" viewBox="0 0 14 12"><path d="M.5.500h13v11H.5z" fill="#fff" stroke="#888"/><path d="M2 2h10v8H2z" fill="#7ab6ec"/><path d="M2 6l6 1 4 2v1H2z" fill="#1e4f55"/></svg></button>
    </footer>
  </section>

  <!-- Exception dialog -->
  <section role="dialog" aria-label="Unhandled exception in script" class="absolute top-[170px] left-[439px] flex h-[332px] w-[402px] flex-col border border-[#999] bg-[#f0f0f0] shadow-md">
    <header class="flex h-[30px] shrink-0 items-center gap-[5px] bg-white pr-[10px] pb-0.5 pl-2 text-[#8a8a8a]"><svg class="size-4"><use href="#err"/></svg><h2>Unhandled exception in script</h2><button aria-label="Dismiss" class="ml-auto"><svg class="size-3"><use href="#x"/></svg></button></header>
    <div class="flex flex-1 flex-col gap-[9px] px-2 pt-[7px] pb-[9px]">
      <div class="flex items-center gap-2"><svg class="size-8"><use href="#err"/></svg><p class="whitespace-nowrap">Failed to execute script 'Install' due to unhandled exception:<br>[WinError 5] Access is denied: 'CrushChecker.exe'</p></div>
      <div class="flex flex-1 border border-[#6e6e6e]">
        <div class="flex min-w-0 flex-1 flex-col">
          <pre class="flex-1 pt-[2px] pl-[5px] font-['Open_Sans','Noto_Sans',sans-serif]">Traceback (most recent call last):
  File "Install.py", line 34, in &lt;module&gt;
PermissionError: [WinError 5] Access is denied: 'CrushChecker.exe'</pre>
          <div class="flex h-[18px] items-center justify-between border-t border-white px-[5px] text-[#aaa]"><svg class="size-2"><use href="#left"/></svg><svg class="size-2"><use href="#right"/></svg></div>
        </div>
        <div class="flex w-[18px] flex-col items-center justify-between border-l border-white pt-[6px] pb-[22px] text-[#aaa]"><svg class="size-2"><use href="#up"/></svg><svg class="size-2"><use href="#down"/></svg></div>
      </div>
      <button class="h-[26px] w-[98px] self-end border border-[#adadad] bg-[#e1e1e1] pb-px">Close</button>
    </div>
  </section>

  <!-- Error message box -->
  <section role="alertdialog" aria-label="Error404" class="absolute top-[291px] left-[519px] flex h-[152px] w-[259px] flex-col border border-[#555] bg-white">
    <header class="flex h-[30px] shrink-0 items-center justify-between pr-[9px] pb-0.5 pl-2"><h2>Error404</h2><button aria-label="Dismiss"><svg class="size-3"><use href="#x"/></svg></button></header>
    <div class="flex flex-1 items-center gap-[9px] pl-[21px]"><svg class="size-8"><use href="#err2"/></svg><p>Couldnt Extract Files, Fatal error</p></div>
    <footer class="flex h-[42px] shrink-0 items-center justify-end bg-[#f0f0f0] pr-[15px]"><button class="h-[23px] w-[75px] border border-r-2 border-b-2 border-[#555] bg-[#f0f0f0]">OK</button></footer>
  </section>
</main>

<!-- Taskbar -->
<footer class="flex h-10 shrink-0 items-stretch bg-linear-to-r from-[#021722] to-[#02040f] text-white">
  <button aria-label="Start" class="flex w-12 items-center justify-center"><svg class="size-4" viewBox="0 0 16 16"><path d="M0 2.300l6.700-1v6.300H0zM7.500 1.200L16 0v7.600H7.500zM0 8.400h6.700v6.300L0 13.700zM7.500 8.400H16V16l-8.500-1.200z" fill="#fff"/></svg></button>
  <label class="flex w-72 items-center gap-2 border border-[#ccc] bg-[#f2f2f2] pl-3 text-[#222]"><svg class="size-[18px]"><use href="#lens"/></svg><input type="search" aria-label="Search" placeholder="Type here to search" class="min-w-0 flex-1 text-[14px] outline-none placeholder:text-[#333]"></label>
  <nav aria-label="Running apps" class="flex gap-px">
    <button aria-label="Task view" class="mr-0.5 flex w-12 items-center justify-center"><svg class="size-4" viewBox="0 0 16 16"><path d="M.5 0v2.500h9V0M.5 5.500h9v5h-9zM.5 16v-2.500h9V16M13.500 0v16M12 5.500h3v3h-3z" fill="none" stroke="#fff" stroke-width="1.100"/></svg></button>
    <button aria-label="Edge" class="flex w-12 items-center justify-center"><svg class="size-6"><use href="#edge"/></svg></button>
    <button aria-label="File Explorer" class="relative flex w-12 items-center justify-center"><svg class="size-6"><use href="#explorer"/></svg><span class="absolute inset-x-1 bottom-0 h-0.5 bg-[#76b9ed]"></span></button>
    <button aria-label="Firefox" class="flex w-12 items-center justify-center"><svg class="size-6"><use href="#firefox"/></svg></button>
    <button aria-label="WinRAR" class="relative flex w-12 items-center justify-center"><svg class="size-6"><use href="#rar"/></svg><span class="absolute inset-x-1 bottom-0 h-0.5 bg-[#76b9ed]"></span></button>
    <button aria-label="Exception" class="relative flex w-12 items-center justify-center"><svg class="size-6"><use href="#err"/></svg><span class="absolute inset-x-1 bottom-0 h-0.5 bg-[#76b9ed]"></span></button>
    <button aria-label="Error404" class="relative flex w-12 items-center justify-center bg-[#38464f]"><svg class="size-6" viewBox="0 0 24 24"><path d="M1 2h22v20H1z" fill="#fff" stroke="#c9cdd0"/><path d="M1 2h22v4H1z" fill="#0b128c"/><path d="M15 4h2M18 4h1M20 4h2" stroke="#fff"/></svg><span class="absolute inset-x-0 bottom-0 h-0.5 bg-[#76b9ed]"></span></button>
  </nav>
  <div class="ml-auto flex items-center">
    <div class="flex items-center gap-2 pr-2">
      <button aria-label="Hidden icons" class="mr-0.5"><svg class="h-4 w-3" viewBox="0 0 12 16"><path d="M.5 11L6 5.500 11.500 11" fill="none" stroke="#fff" stroke-width="1.200"/></svg></button>
      <svg class="h-4 w-4" viewBox="0 0 16 16"><g fill="none" stroke="#fff"><rect x="3.500" y="4" width="7" height="8" rx="1"/><path d="M10.500 7l3-1.500v5l-3-1.500M4 1.500Q7.500-.5 11 1.500M4 14.500q3.500 2 7 0"/></g></svg>
      <svg class="h-4 w-4" viewBox="0 0 16 16"><g fill="none" stroke="#fff"><path d="M4.500 3.500h11v8H3.500M9.500 11.500v3M6 14.500h7M2.500 6v8.500h3"/><path d="M.5 1.500h4v4.500h-4z"/></g></svg>
      <svg class="h-4 w-4" viewBox="0 0 16 16"><path d="M.5 5.500h2.500l3-3v11l-3-3H.5zM8 6q1.500 2 0 4M10.500 4q3 4 0 8M13 2q4.500 6 0 12" fill="none" stroke="#fff"/></svg>
    </div>
    <time class="w-[54px] text-center leading-[18px]">6:59 AM<br>5/16/2025</time>
    <button aria-label="Notifications" class="mr-5 ml-[18px]"><svg class="size-4" viewBox="0 0 16 16"><path d="M.5 1.500h15v11h-5L8 15l-2.500-2.500h-5z" fill="none" stroke="#fff"/></svg></button>
    <button aria-label="Show desktop" class="h-10 w-[5px] border-l border-[#555f66]"></button>
  </div>
</footer>
</div>
</body>
</html>
